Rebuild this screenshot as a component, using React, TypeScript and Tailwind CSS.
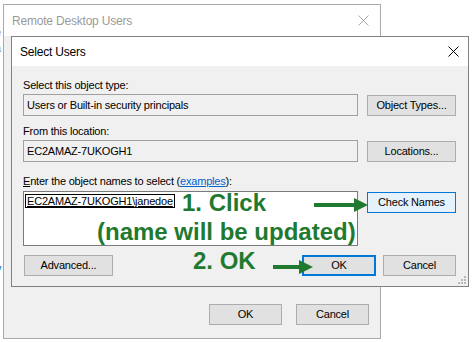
import React from "react";

function CloseIcon({ color }: { color: string }) {
  return (
    <svg width="11" height="11" viewBox="0 0 11 11" fill="none">
      <path d="M0.5 0.5 L10.5 10.5 M10.5 0.5 L0.5 10.5" stroke={color} strokeWidth="1" />
    </svg>
  );
}

function Btn({
  children,
  className = "",
}: {
  children: React.ReactNode;
  className?: string;
}) {
  return (
    <div
      className={`flex h-[21px] items-center justify-center border border-[#adadad] bg-[#e1e1e1] text-black ${className}`}
    >
      {children}
    </div>
  );
}

function Arrow({ width }: { width: number }) {
  return (
    <svg width={width} height="14" viewBox={`0 0 ${width} 14`}>
      <rect x="0" y="5" width={width - 12} height="4" fill="#1f7a30" />
      <polygon points={`${width - 14},0 ${width},7 ${width - 14},14`} fill="#1f7a30" />
    </svg>
  );
}

export default function App() {
  return (
    <div className="relative h-[342px] w-[474px] overflow-hidden bg-white font-['Liberation_Sans',Arial,sans-serif] text-[11px] tracking-[-0.2px] text-black">
      {/* bits of the window behind */}
      <span className="absolute left-[-5px] top-[24px] text-[#8a8a8a]">e</span>
      <span className="absolute left-[-5px] top-[40px] text-[#8a8a8a]">a</span>
      <span className="absolute left-[-4px] top-[187px]">r</span>
      <span className="absolute left-[-4px] top-[260px] text-[#0066cc]">y</span>

      {/* Remote Desktop Users window */}
      <div className="absolute left-[3px] top-[4px] flex h-[335px] w-[378px] flex-col border border-[#aaaaaa] bg-[#f0f0f0]">
        <div className="flex h-[31px] items-center justify-between bg-white pl-[8px] pr-[11px]">
          <span className="text-[12px] text-[#9a9a9a]">Remote Desktop Users</span>
          <CloseIcon color="#a8a8a8" />
        </div>
        <div className="flex-1" />
        <div className="flex justify-end gap-[14px] pb-[13px] pr-[11px]">
          <Btn className="w-[73px]">OK</Btn>
          <Btn className="w-[73px]">Cancel</Btn>
        </div>
      </div>

      {/* Select Users dialog */}
      <div className="absolute left-[11px] top-[36px] flex h-[251px] w-[458px] flex-col border border-[#808080] bg-[#f0f0f0]">
        <div className="flex h-[29px] items-center justify-between bg-white pl-[8px] pr-[9px]">
          <span className="text-[12px]">Select Users</span>
          <CloseIcon color="#000000" />
        </div>

        <div className="flex flex-1 flex-col pl-[11px] pr-[12px]">
          <div className="mt-[12px] leading-[14px]">Select this object type:</div>
          <div className="mt-[2px] flex items-start gap-[9px]">
            <div className="flex h-[22px] flex-1 items-center border border-[#a0a0a0] bg-[#f0f0f0] pl-[3px]">
              Users or Built-in security principals
            </div>
            <Btn className="mt-[1px] w-[89px]">Object Types...</Btn>
          </div>

          <div className="mt-[8px] leading-[14px]">From this location:</div>
          <div className="mt-[2px] flex items-start gap-[9px]">
            <div className="flex h-[22px] flex-1 items-center border border-[#a0a0a0] bg-[#f0f0f0] pl-[3px]">
              EC2AMAZ-7UKOGH1
            </div>
            <Btn className="mt-[1px] w-[89px]">Locations...</Btn>
          </div>

          <div className="mt-[12px] leading-[14px]">
            <span className="underline">E</span>nter the object names to select (
            <span className="text-[#0066cc] underline">examples</span>):
          </div>
          <div className="mt-[3px] flex items-start gap-[9px]">
            <div className="h-[55px] flex-1 border border-[#7a7a7a] bg-white pl-[1px] pt-[1px]">
              <span className="inline-block border border-black px-[1px] leading-[12px] underline">
                EC2AMAZ-7UKOGH1\janedoe
              </span>
            </div>
            <div className="mt-[1px] flex h-[21px] w-[89px] items-center justify-center border border-[#0078d7] bg-[#e5f1fb]">
              Check Names
            </div>
          </div>

          <div className="mt-[9px] flex items-center">
            <Btn className="ml-[1px] w-[89px]">Advanced...</Btn>
            <div className="flex-1" />
            <div className="flex h-[21px] w-[74px] items-center justify-center border-2 border-[#0078d7] bg-[#e1e1e1]">
              OK
            </div>
            <Btn className="ml-[7px] w-[73px]">Cancel</Btn>
          </div>
        </div>

        {/* resize grip */}
        <svg className="absolute bottom-[2px] right-[2px]" width="8" height="8" viewBox="0 0 8 8">
          <rect x="6" y="0" width="2" height="2" fill="#b8b8b8" />
          <rect x="3" y="3" width="2" height="2" fill="#b8b8b8" />
          <rect x="6" y="3" width="2" height="2" fill="#b8b8b8" />
          <rect x="0" y="6" width="2" height="2" fill="#b8b8b8" />
          <rect x="3" y="6" width="2" height="2" fill="#b8b8b8" />
          <rect x="6" y="6" width="2" height="2" fill="#b8b8b8" />
        </svg>
      </div>

      {/* annotations */}
      <div className="absolute left-[182px] top-[191px] text-[24px] font-bold leading-[24px] tracking-normal text-[#1f7a30]">
        1. Click
      </div>
      <div className="absolute left-[97px] top-[220px] text-[24px] font-bold leading-[24px] tracking-normal text-[#1f7a30]">
        (name will be updated)
      </div>
      <div className="absolute left-[193px] top-[249px] text-[24px] font-bold leading-[24px] tracking-normal text-[#1f7a30]">
        2. OK
      </div>
      <div className="absolute left-[314px] top-[198px]">
        <Arrow width={54} />
      </div>
      <div className="absolute left-[273px] top-[260px]">
        <Arrow width={40} />
      </div>
    </div>
  );
}
